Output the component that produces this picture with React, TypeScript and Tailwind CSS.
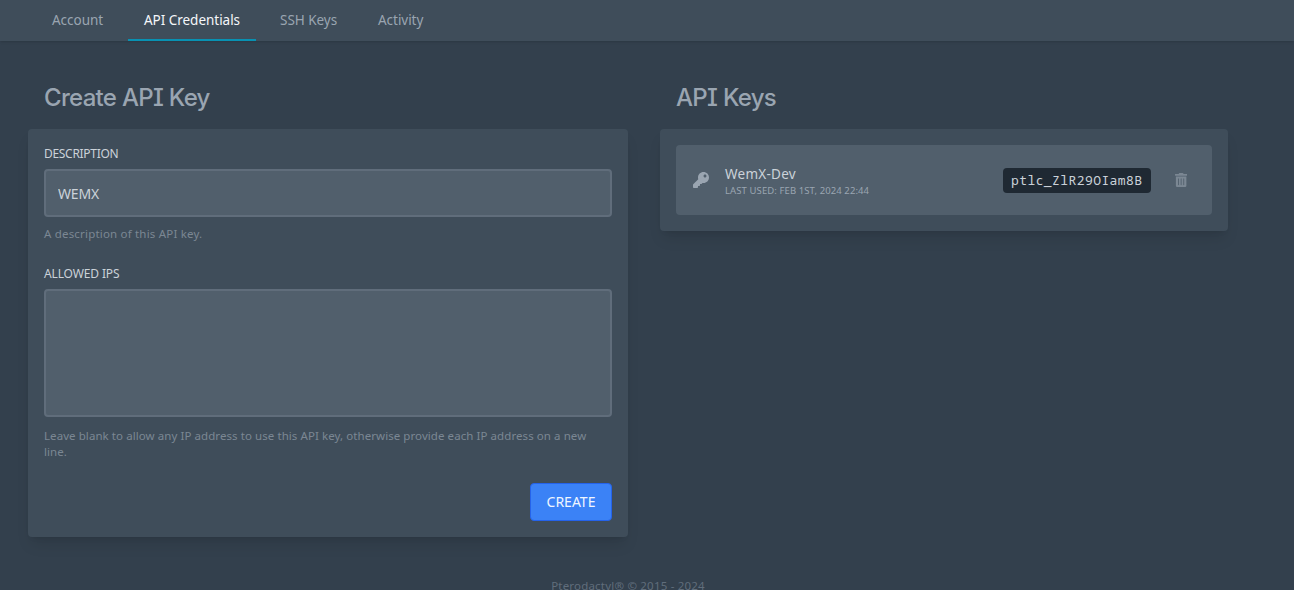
import type { ReactNode } from "react";
import { FaKey } from "react-icons/fa";

const tabs = [
  { label: "Account", width: "w-[84px]" },
  { label: "API Credentials", width: "w-32", active: true },
  { label: "SSH Keys", width: "w-[90px]" },
  { label: "Activity", width: "w-20" },
];

function Heading({ children }: { children: ReactNode }) {
  return (
    <h2 className="mb-3.5 flex h-[34px] items-center whitespace-pre px-4 font-['Inter',sans-serif] text-[24px] font-medium tracking-[-0.7px] text-[#9aa5b1] [font-feature-settings:'cv08']">
      {children}
    </h2>
  );
}

function TrashIcon() {
  return (
    <svg viewBox="0 0 448 512" className="h-[14px] w-[12.250px] fill-current">
      <path d="M32 464a48 48 0 0 0 48 48h288a48 48 0 0 0 48-48V128H32zm272-256a16 16 0 0 1 32 0v224a16 16 0 0 1-32 0zm-96 0a16 16 0 0 1 32 0v224a16 16 0 0 1-32 0zm-96 0a16 16 0 0 1 32 0v224a16 16 0 0 1-32 0zM432 32H312l-9.400-18.700A24 24 0 0 0 281.100 0H166.800a23.700 23.700 0 0 0-21.400 13.300L136 32H16A16 16 0 0 0 0 48v32a16 16 0 0 0 16 16h416a16 16 0 0 0 16-16V48a16 16 0 0 0-16-16z" />
    </svg>
  );
}

export default function App() {
  return (
    <div className="h-[590px] overflow-hidden bg-[#33404d] font-['Noto_Sans',sans-serif] text-[#cbd2d9]">
      <nav className="flex h-[41px] bg-[#3f4d5a] pl-9 text-[13.500px] tracking-[-0.03px] shadow">
        {tabs.map((tab) => (
          <a
            key={tab.label}
            className={`mr-2 flex h-full shrink-0 items-center whitespace-nowrap px-4 ${tab.width} ${
              tab.active ? "text-[#f5f7fa] shadow-[inset_0_-2px_#0891b2]" : "text-[#9aa5b1]"
            }`}
          >
            {tab.label}
          </a>
        ))}
      </nav>

      <main className="ml-7 mt-10 flex w-[1200px] items-start gap-8">
        <section className="w-[600px]">
          <Heading>Create API Key</Heading>
          <form className="h-[408px] rounded bg-[#3f4d5a] px-4 pt-4 shadow-lg">
            <label className="mb-2 block h-4 text-[12px] leading-[18px] tracking-[-0.3px]">DESCRIPTION</label>
            <input
              defaultValue="WEMX"
              className="block h-12 w-full rounded border-2 border-[#606d7b] bg-[#515f6c] px-3 text-[14px] tracking-[-0.2px] outline-none"
            />
            <p className="mt-2 h-4 text-[11.500px] leading-[18px] tracking-[0.19px] text-[#7b8793]">A description of this API key.</p>
            <label className="mb-2 mt-6 block h-4 text-[12px] leading-[18px] tracking-[-0.13px]">ALLOWED IPS</label>
            <textarea className="block h-32 w-full resize-none rounded border-2 border-[#606d7b] bg-[#515f6c] p-3 outline-none" />
            <p className="mt-[11px] whitespace-nowrap text-[11.500px] leading-4 tracking-[0.072px] text-[#7b8793]">
              Leave blank to allow any IP address to use this API key, otherwise provide each IP address on a new
              <br />
              line.
            </p>
            <div className="mt-[23px] flex justify-end">
              <button
                type="button"
                className="h-[38px] w-[82px] rounded border border-[#2563eb] bg-[#3b82f6] pb-0.5 text-[14px] text-[#eff6ff]"
              >
                CREATE
              </button>
            </div>
          </form>
        </section>

        <section className="w-[568px]">
          <Heading>API Keys</Heading>
          <div className="rounded bg-[#3f4d5a] p-4 shadow-lg">
            <div className="flex h-[70px] items-center rounded bg-[#515f6c] pl-[17px] pr-[25px]">
              <FaKey className="size-4 text-[#9aa5b1]" />
              <div className="ml-4 flex-1 pt-1">
                <p className="h-[18px] text-[13.500px] leading-[18px] tracking-[0.25px]">WemX-Dev</p>
                <p className="h-4 text-[9.500px] leading-[16px] tracking-[0.1px] text-[#9aa5b1]">LAST USED: FEB 1ST, 2024 22:44</p>
              </div>
              <code className="flex h-[25px] w-[148px] items-center justify-center rounded bg-[#1f2933] pt-px font-['Noto_Sans_Mono','DejaVu_Sans_Mono',monospace] text-[13px] tracking-[0.42px]">
                ptlc_ZlR29OIam8B
              </code>
              <button type="button" aria-label="Delete" className="ml-6 text-[#7b8793]">
                <TrashIcon />
              </button>
            </div>
          </div>
        </section>
      </main>

      <footer className="ml-7 mt-10 w-[1200px] text-center text-[11.500px] leading-[18px] tracking-[0.2px] text-[#606d7b]">
        Pterodactyl® © 2015 - 2024
      </footer>
    </div>
  );
}
